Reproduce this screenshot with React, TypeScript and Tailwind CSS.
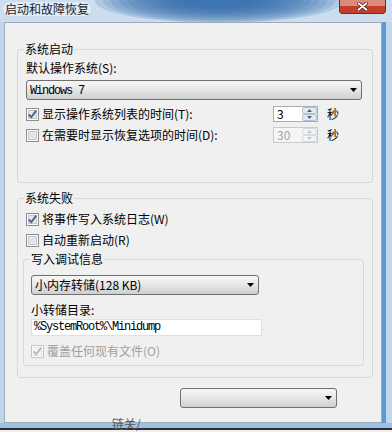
import React from "react";

function Check({ checked = false, disabled = false }: { checked?: boolean; disabled?: boolean }) {
  const border = disabled ? "#c6c6c6" : "#8e8f8f";
  const innerStroke = disabled ? "#e2e2e2" : "#c3c7cd";
  const inner = disabled ? "#f6f6f6" : "#e4e6ea";
  const mark = disabled ? "#b8b8b8" : "#4e5f88";
  return (
    <svg width="13" height="13" viewBox="0 0 13 13" className="shrink-0">
      <rect x="0.5" y="0.5" width="12" height="12" fill="#fcfcfc" stroke={border} />
      <rect x="2.5" y="2.5" width="8" height="8" fill={inner} stroke={innerStroke} />
      {checked && (
        <path d="M2.8 6.4 L5.2 9.2 L10.2 2.6" fill="none" stroke={mark} strokeWidth="1.9" strokeLinejoin="round" />
      )}
    </svg>
  );
}

function Arrow() {
  return (
    <svg width="7" height="4" viewBox="0 0 7 4" className="shrink-0">
      <path d="M0 0 H7 L3.5 4 Z" fill="#000" />
    </svg>
  );
}

function Combo({ children, className = "" }: { children?: React.ReactNode; className?: string }) {
  return (
    <div
      className={
        "flex items-center h-[20px] rounded-[3px] border border-[#707070] bg-[#e3e3e3] bg-linear-to-b from-[#f4f4f4] from-10% via-[#e6e6e6] via-50% to-[#cfcfcf] pl-[3px] pr-[4px] " +
        className
      }
    >
      <div className="flex-1 truncate leading-[16px]">{children}</div>
      <Arrow />
    </div>
  );
}

function SpinBtn({ up = false, disabled = false }: { up?: boolean; disabled?: boolean }) {
  return (
    <div
      className={
        "h-[7px] flex items-center justify-center rounded-[2px] border " +
        (disabled ? "border-[#d6dbe1] bg-[#f2f4f6]" : "border-[#b4c2d3] bg-[#e3eaf2]")
      }
    >
      <svg width="5" height="3" viewBox="0 0 5 3">
        {up ? (
          <path d="M0 3 H5 L2.5 0 Z" fill={disabled ? "#bcc4cf" : "#4d6185"} />
        ) : (
          <path d="M0 0 H5 L2.5 3 Z" fill={disabled ? "#bcc4cf" : "#4d6185"} />
        )}
      </svg>
    </div>
  );
}

function Spin({ value, disabled = false }: { value: string; disabled?: boolean }) {
  return (
    <div
      className={
        "flex w-[45px] h-[16px] border shrink-0 " +
        (disabled ? "border-[#cacaca] bg-[#f5f5f5]" : "border-[#abadb3] bg-white")
      }
    >
      <div className={"flex-1 pl-[3px] leading-[14px] " + (disabled ? "text-[#a3a3a3]" : "text-black")}>{value}</div>
      <div className="w-[15px] flex flex-col">
        <SpinBtn up disabled={disabled} />
        <SpinBtn disabled={disabled} />
      </div>
    </div>
  );
}

function CloseButton() {
  return (
    <div className="shrink-0 w-[47px] h-[14px] rounded-b-[4px] border border-t-0 border-[#6b2a22] bg-[#c4432e] overflow-hidden flex flex-col">
      <div className="h-[6px] bg-[#dc8b7a]" />
      <div className="flex-1 bg-[#c23f2a] flex items-start justify-center">
        <svg width="11" height="9" viewBox="0 0 11 9" className="-mt-[4px]">
          <path d="M1.5 1.2 L9.5 7.8 M9.5 1.2 L1.5 7.8" stroke="#4a1410" strokeWidth="3.4" strokeLinecap="round" />
          <path d="M1.5 1.2 L9.5 7.8 M9.5 1.2 L1.5 7.8" stroke="#ffffff" strokeWidth="1.9" strokeLinecap="round" />
        </svg>
      </div>
    </div>
  );
}

const glowRings = [
  [124, 22],
  [116, 21],
  [108, 20],
  [100, 18.5],
  [92, 17],
  [84, 15.5],
  [76, 14],
  [68, 12.5],
  [60, 11],
  [52, 9.5],
  [44, 8],
  [36, 6.5],
];

function TitleGlow() {
  return (
    <svg width="248" height="22" viewBox="0 0 248 22" className="shrink-0">
      {glowRings.map(([rx, ry], i) => (
        <ellipse key={i} cx="128" cy="1" rx={rx} ry={ry} fill="#2f6dad" fillOpacity="0.17" />
      ))}
    </svg>
  );
}

export default function App() {
  return (
    <div className="relative w-[392px] h-[432px] overflow-hidden flex flex-col bg-[#c3d8ee] text-[12px] leading-[14px] text-black [font-family:'Noto_Sans_CJK_SC','Noto_Sans',sans-serif]">
      {/* Title bar */}
      <div className="h-[22px] shrink-0 flex items-start bg-[#cbddef]">
        <span className="ml-[3px] mt-[2px] w-[88px] shrink-0 px-[2px] text-[#1c1c1c] rounded-[7px] bg-[#e2edf7]">启动和故障恢复</span>
        <TitleGlow />
        <CloseButton />
      </div>

      {/* Body row */}
      <div className="flex h-[401px] shrink-0">
        <div className="w-[4px] bg-[#bed5eb]" />
        <div className="w-[378px] border border-[#9eabb8] bg-[#f0f0f0] flex flex-col">
          {/* Group 1 */}
          <fieldset className="ml-[12px] mt-[19px] w-[356px] border border-[#d3d8dc] rounded-[3px]">
            <legend className="ml-[6px] px-[1px] leading-[14px]">系统启动</legend>
            <div className="pl-[8px] pr-[10px] pb-[39px]">
              <div className="mt-[5px]">默认操作系统(S):</div>
              <Combo className="mt-[5px]">
                <span className="[font-family:'Liberation_Mono',monospace] tracking-[-1.2px]">Windows 7</span>
              </Combo>
              <div className="mt-[6px] flex items-center h-[16px]">
                <Check checked />
                <span className="ml-[3px] w-[231px] shrink-0">显示操作系统列表的时间(T):</span>
                <Spin value="3" />
                <span className="ml-[9px]">秒</span>
              </div>
              <div className="mt-[5px] flex items-center h-[16px]">
                <Check />
                <span className="ml-[3px] w-[231px] shrink-0">在需要时显示恢复选项的时间(D):</span>
                <Spin value="30" disabled />
                <span className="ml-[9px]">秒</span>
              </div>
            </div>
          </fieldset>

          {/* Group 2 */}
          <fieldset className="ml-[12px] mt-[8px] w-[356px] border border-[#d3d8dc] rounded-[3px]">
            <legend className="ml-[6px] px-[1px] leading-[14px]">系统失败</legend>
            <div className="pl-[5px] pb-[11px]">
              <div className="mt-[6px] pl-[3px] flex items-center h-[16px]">
                <Check checked />
                <span className="ml-[3px]">将事件写入系统日志(W)</span>
              </div>
              <div className="mt-[5px] pl-[3px] flex items-center h-[16px]">
                <Check />
                <span className="ml-[3px]">自动重新启动(R)</span>
              </div>

              <fieldset className="mt-[4px] w-[341px] border border-[#d3d8dc] rounded-[3px]">
                <legend className="ml-[6px] px-[1px] leading-[14px]">写入调试信息</legend>
                <div className="pl-[7px] pb-[6px]">
                  <Combo className="mt-[9px] w-[228px]">小内存转储(128 KB)</Combo>
                  <div className="mt-[8px]">小转储目录:</div>
                  <div className="mt-[2px] w-[231px] h-[17px] border border-[#dde1e6] bg-white pl-[2px] flex items-center">
                    <span className="[font-family:'Liberation_Mono',monospace] tracking-[-1.2px] leading-[15px]">
                      {"%SystemRoot%\\Minidump"}
                    </span>
                  </div>
                  <div className="mt-[7px] flex items-center h-[16px]">
                    <Check checked disabled />
                    <span className="ml-[3px] text-[#a0a0a0]">覆盖任何现有文件(O)</span>
                  </div>
                </div>
              </fieldset>
            </div>
          </fieldset>

          <Combo className="mt-[10px] ml-[175px] w-[157px]" />
        </div>
        <div className="flex-1 flex">
          <div className="w-[4px] bg-[#5f98d0]" />
          <div className="flex-1 bg-[#c2d7ec]" />
        </div>
      </div>

      {/* Bottom frame */}
      <div className="h-[5px] shrink-0 bg-[#9fc2e4]" />
      <div className="h-[2px] shrink-0 bg-[#2b2f35]" />
      <div className="flex-1 bg-[#efefef]" />

      <span className="absolute left-[112px] top-[417px] text-[#555555]">链关/</span>
    </div>
  );
}
